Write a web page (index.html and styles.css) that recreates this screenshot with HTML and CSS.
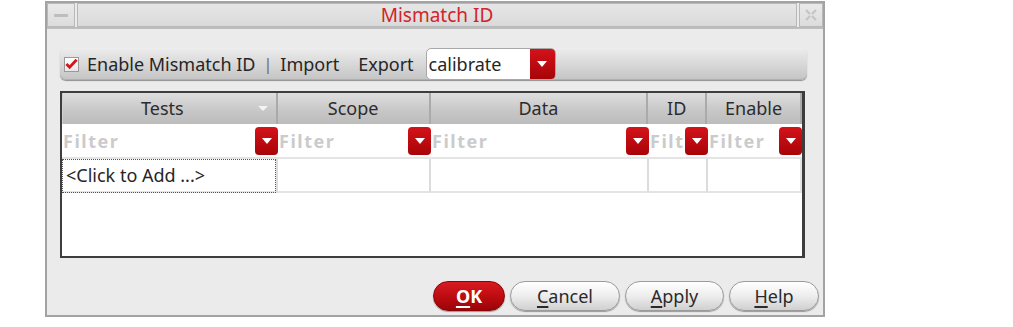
FILE: index.html
```html
<!DOCTYPE html>
<html>
<head>
<meta charset="utf-8">
<link rel="stylesheet" href="styles.css">
</head>
<body>
<div class="window">
  <div class="titlebar">
    <div class="tb-btn tb-min"><span class="min-bar"></span></div>
    <div class="tb-title">Mismatch ID</div>
    <div class="tb-btn tb-close">
      <svg width="14" height="14" viewBox="0 0 14 14"><path d="M2 2 L6 6 M12 2 L8 6 M2 12 L6 8 M12 12 L8 8" stroke="#c4c4c4" stroke-width="2.2" fill="none"/></svg>
    </div>
  </div>
  <div class="content">
    <div class="toolbar">
      <span class="check"><svg width="14" height="12" viewBox="0 0 14 12"><path d="M1.5 6 L5 9.5 L12.5 1.5" stroke="#d8131a" stroke-width="3" fill="none"/></svg></span>
      <span class="tlabel">Enable Mismatch ID</span>
      <span class="sep">|</span>
      <span class="tlabel">Import</span>
      <span class="tlabel export">Export</span>
      <div class="combo">
        <span class="combo-text">calibrate</span>
        <span class="combo-btn"><span class="tri"></span></span>
      </div>
    </div>
    <div class="table">
      <div class="row head">
        <div class="cell c1"><span class="htxt">Tests</span><span class="sort"></span></div>
        <div class="cell c2">Scope</div>
        <div class="cell c3">Data</div>
        <div class="cell c4">ID</div>
        <div class="cell c5">Enable</div>
      </div>
      <div class="row filter">
        <div class="cell c1"><span class="ftxt">Filter</span><span class="rbtn"><span class="tri"></span></span></div>
        <div class="cell c2"><span class="ftxt">Filter</span><span class="rbtn"><span class="tri"></span></span></div>
        <div class="cell c3"><span class="ftxt">Filter</span><span class="rbtn"><span class="tri"></span></span></div>
        <div class="cell c4"><span class="ftxt">Filt</span><span class="rbtn"><span class="tri"></span></span></div>
        <div class="cell c5"><span class="ftxt">Filter</span><span class="rbtn"><span class="tri"></span></span></div>
      </div>
      <div class="row data">
        <div class="cell c1"><span class="add">&lt;Click to Add ...&gt;</span></div>
        <div class="cell c2"></div>
        <div class="cell c3"></div>
        <div class="cell c4"></div>
        <div class="cell c5"></div>
      </div>
    </div>
    <div class="buttons">
      <button class="btn ok"><u>O</u>K</button>
      <button class="btn cancel"><u>C</u>ancel</button>
      <button class="btn apply"><u>A</u>pply</button>
      <button class="btn help"><u>H</u>elp</button>
    </div>
  </div>
</div>
</body>
</html>
```

FILE: styles.css
```css
html, body {
  margin: 0;
  padding: 0;
  background: #ffffff;
}
body {
  font-family: "Noto Sans", "Open Sans", sans-serif;
  color: #2a2a2a;
  width: 1013px;
  height: 327px;
  overflow: hidden;
}
.window {
  margin: 1px 0 0 45px;
  width: 776px;
  height: 312px;
  border: 2px solid #a3a3a3;
  background: #ebebeb;
  display: flex;
  flex-direction: column;
}
.titlebar {
  display: flex;
  height: 24px;
  gap: 2px;
  border-bottom: 2px solid #bdbdbd;
}
.tb-btn {
  background: linear-gradient(#e9e9e9, #dcdcdc);
  border: 1px solid #b8b8b8;
  display: flex;
  align-items: center;
  justify-content: center;
}
.tb-min {
  width: 26px;
}
.min-bar {
  width: 14px;
  height: 3px;
  background: #bdbdbd;
  border-radius: 1px;
}
.tb-close {
  width: 22px;
}
.tb-title {
  flex: 1;
  background: linear-gradient(#e6e6e6, #dadada);
  border: 1px solid #b8b8b8;
  color: #d3242a;
  font-size: 19px;
  text-align: center;
  line-height: 22px;
}
.content {
  padding: 19px 0 0 13px;
  display: flex;
  flex-direction: column;
}
.toolbar {
  width: 747px;
  height: 32px;
  box-sizing: border-box;
  border-radius: 6px;
  background: linear-gradient(#ededed 0%, #dadada 45%, #c4c4c4 100%);
  box-shadow: 0 1px 1px #8f8f8f, inset 0 -1px 0 #b0b0b0;
  display: flex;
  align-items: center;
  padding-left: 4px;
  font-size: 18px;
}
.check {
  width: 15px;
  height: 15px;
  box-sizing: border-box;
  border: 1px solid #9a9a9a;
  background: linear-gradient(#ffffff, #e6e6e6);
  display: flex;
  align-items: center;
  justify-content: center;
  margin-right: 8px;
}
.tlabel {
  color: #262626;
}
.sep {
  margin: 0 8px 0 8px;
  color: #6a6a6a;
  font-size: 16px;
}
.export {
  margin-left: 19px;
}
.combo {
  margin-left: 12px;
  width: 130px;
  height: 32px;
  box-sizing: border-box;
  display: flex;
  border-radius: 5px;
  background: #ffffff;
  border: 1px solid #a8a8a8;
  overflow: hidden;
}
.combo-text {
  flex: 1;
  padding-left: 2px;
  line-height: 30px;
  color: #262626;
}
.combo-btn {
  width: 25px;
  background: linear-gradient(#d4121a, #a70408);
  display: flex;
  align-items: center;
  justify-content: center;
}
.tri {
  width: 0;
  height: 0;
  border-left: 5px solid transparent;
  border-right: 5px solid transparent;
  border-top: 6px solid #ffffff;
}
.table {
  margin-top: 11px;
  width: 745px;
  height: 167px;
  box-sizing: border-box;
  border: 2px solid #3d3d3d;
  border-right-width: 3px;
  background: #ffffff;
  display: flex;
  flex-direction: column;
}
.row {
  display: flex;
}
.cell {
  box-sizing: border-box;
  border-right: 2px solid #dcdcdc;
  position: relative;
}
.c1 { width: 216px; }
.c2 { width: 153px; }
.c3 { width: 218px; }
.c4 { width: 59px; }
.c5 { width: 94px; border-right: none; }
.head .cell {
  height: 31px;
  background: linear-gradient(#dedede, #c6c6c6 60%, #bcbcbc);
  border-right: 2px solid #aaaaaa;
  text-align: center;
  line-height: 30px;
  font-size: 18px;
  color: #2c2c2c;
}
.head .c1 {
  border-left: 1px solid #d0d0d0;
  padding-right: 14px;
}
.head .c5 { border-right: 2px solid #aaaaaa; width: 95px; }
.sort {
  position: absolute;
  right: 8px;
  top: 13px;
  width: 0;
  height: 0;
  border-left: 5px solid transparent;
  border-right: 5px solid transparent;
  border-top: 5px solid #f4f4f4;
}
.filter .cell {
  height: 35px;
  display: flex;
  align-items: center;
  justify-content: space-between;
  border-bottom: 2px solid #e4e4e4;
  border-right: none;
  overflow: hidden;
}
.ftxt {
  color: #cbcbcb;
  font-size: 18px;
  font-weight: bold;
  letter-spacing: 1.5px;
  padding-left: 1px;
}
.rbtn {
  width: 23px;
  height: 28px;
  flex: none;
  border-radius: 4px;
  background: linear-gradient(#d4121a, #a70408);
  display: flex;
  align-items: center;
  justify-content: center;
}
.data .cell {
  height: 34px;
  border-bottom: 2px solid #e4e4e4;
}
.data .c5 { border-right: 2px solid #e4e4e4; }
.add {
  display: block;
  height: 34px;
  box-sizing: border-box;
  border: 1px dotted #555555;
  font-size: 18px;
  line-height: 31px;
  padding-left: 3px;
  color: #262626;
}
.buttons {
  margin-top: 23px;
  display: flex;
  justify-content: flex-end;
  gap: 5px;
  width: 759px;
}
.btn {
  height: 30px;
  border-radius: 15px;
  font-family: "Noto Sans", "Open Sans", sans-serif;
  font-size: 18px;
  color: #2a2a2a;
  border: 1px solid #9b9b9b;
  background: linear-gradient(#ffffff, #ededed 50%, #d0d0d0);
  box-shadow: 0 1px 1px #9a9a9a;
  padding: 0;
}
.btn u {
  text-decoration-thickness: 2px;
  text-underline-offset: 3px;
}
.ok {
  width: 72px;
  background: linear-gradient(#d81a20, #b80a0f 60%, #9a0508);
  border-color: #8a0306;
  color: #ffffff;
  font-weight: bold;
}
.cancel { width: 110px; }
.apply { width: 99px; }
.help { width: 90px; }
```
